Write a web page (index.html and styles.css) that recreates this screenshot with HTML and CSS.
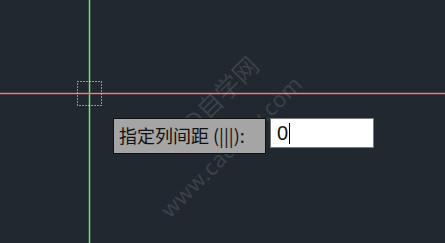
FILE: index.html
```html
<!DOCTYPE html>
<html lang="zh">
<head>
<meta charset="utf-8">
<link rel="stylesheet" href="styles.css">
</head>
<body>
<div class="canvas">
  <div class="v-line"></div>
  <div class="h-line"></div>
  <svg class="pickbox" width="26" height="26" viewBox="0 0 26 26">
    <rect x="0.5" y="0.5" width="24" height="24" fill="none" stroke="#ffffff" stroke-width="1" stroke-dasharray="1 2"/>
  </svg>
  <div class="watermark">
    <div class="wm-1">CAD自学网</div>
    <div class="wm-2">www.cadzxw.com</div>
  </div>
  <div class="prompt">
    <div class="prompt-label">指定列间距 (|||):</div>
    <div class="prompt-input"><span class="val">0</span><span class="caret"></span></div>
  </div>
</div>
</body>
</html>
```
FILE: styles.css
```css
html, body {
  margin: 0;
  padding: 0;
  background: #212830;
}
.canvas {
  position: relative;
  width: 445px;
  height: 243px;
  overflow: hidden;
  background: #212830;
  font-family: "Noto Sans CJK SC", "Noto Sans", sans-serif;
}
.v-line {
  position: absolute;
  left: 89px;
  top: 0;
  width: 1px;
  height: 243px;
  background: #86d686;
  box-shadow: 0 0 0 1px rgba(90, 170, 90, 0.35);
}
.h-line {
  position: absolute;
  left: 0;
  top: 93px;
  width: 445px;
  height: 1px;
  background: #d88a8a;
  box-shadow: 0 0 0 1px rgba(170, 90, 90, 0.35);
}
.pickbox {
  position: absolute;
  left: 77px;
  top: 81px;
  display: block;
}
.watermark {
  position: absolute;
  left: 117px;
  top: 166px;
  width: 260px;
  transform-origin: 0 0;
  transform: rotate(-45deg);
  color: rgba(255, 255, 255, 0.12);
  font-family: "Noto Sans", "Noto Sans CJK SC", sans-serif;
  line-height: 44px;
  white-space: nowrap;
  pointer-events: none;
}
.wm-1 {
  font-size: 25px;
  padding-left: 46px;
}
.wm-2 {
  font-size: 22px;
  letter-spacing: 0.5px;
}
.prompt {
  position: absolute;
  left: 113px;
  top: 118px;
  display: flex;
  align-items: flex-start;
  gap: 4px;
}
.prompt-label {
  box-sizing: border-box;
  height: 36px;
  width: 153px;
  background: #a5a5a5;
  border: 1px solid #111111;
  color: #111111;
  font-size: 18px;
  line-height: 32px;
  padding-left: 5px;
  white-space: nowrap;
}
.prompt-input {
  box-sizing: border-box;
  width: 104px;
  height: 30px;
  background: #ffffff;
  border: 1px solid #7a7a7a;
  display: flex;
  align-items: center;
  padding-left: 6px;
  color: #111111;
  font-family: "Liberation Sans", sans-serif;
  font-size: 20px;
}
.caret {
  display: inline-block;
  width: 1px;
  height: 21px;
  background: #000000;
  margin-left: 1px;
}
```
